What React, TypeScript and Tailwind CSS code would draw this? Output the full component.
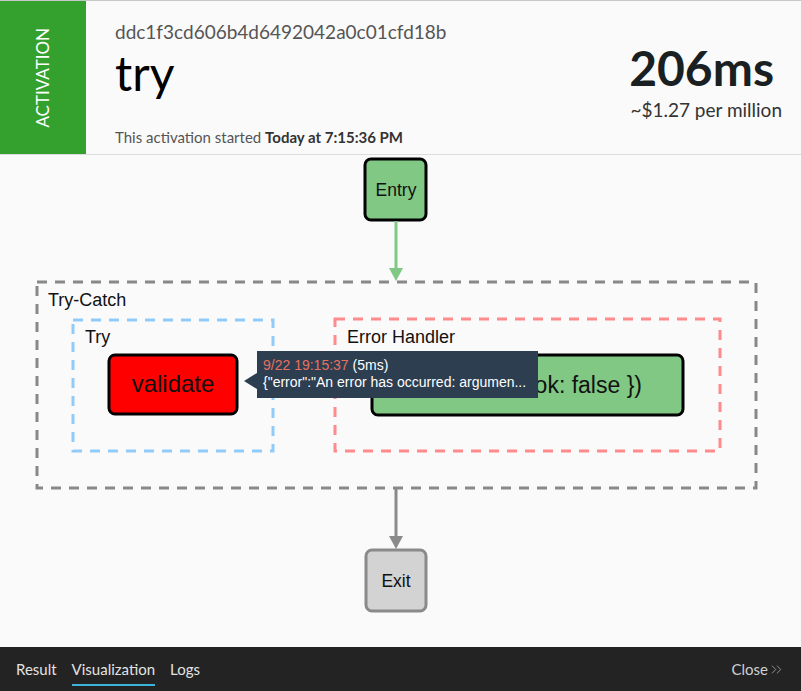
import { ChevronsRight } from "lucide-react";

const TABS = [
  { label: "Result", active: false },
  { label: "Visualization", active: true },
  { label: "Logs", active: false },
];

function Diagram() {
  return (
    <svg
      className="absolute inset-0"
      width={801}
      height={492}
      viewBox="0 155 801 492"
      style={{ fontFamily: '"Liberation Sans", Arial, sans-serif' }}
    >
      {/* entry */}
      <rect x={365} y={159} width={61} height={61} rx={6} fill="#80c883" stroke="#000" strokeWidth={3} />
      <text x={396} y={196} textAnchor="middle" fontSize={17.5} fill="#111">Entry</text>
      <line x1={396} y1={221} x2={396} y2={270} stroke="#80c883" strokeWidth={3} />
      <polygon points="389,268 403,268 396,281" fill="#80c883" />

      {/* try-catch */}
      <rect x={37} y={282} width={719} height={206} fill="none" stroke="#888" strokeWidth={3} strokeDasharray="10 8" />
      <text x={48} y={306} fontSize={18} fill="#111">Try-Catch</text>

      {/* try */}
      <rect x={73} y={320} width={200} height={131} fill="none" stroke="#90cbf9" strokeWidth={3} strokeDasharray="10 8" />
      <text x={85} y={343} fontSize={18} fill="#111">Try</text>
      <rect x={109} y={355} width={128} height={59} rx={6} fill="#ff0000" stroke="#000" strokeWidth={3} />
      <text x={173} y={392} textAnchor="middle" fontSize={24} fill="#111">validate</text>

      {/* error handler */}
      <rect x={335} y={319} width={385} height={132} fill="none" stroke="#ff8a8c" strokeWidth={3} strokeDasharray="10 8" />
      <text x={347} y={343} fontSize={18} fill="#111">Error Handler</text>
      <rect x={372} y={355} width={311} height={60} rx={6} fill="#80c883" stroke="#000" strokeWidth={3} />
      <text x={642} y={393} textAnchor="end" fontSize={23} fill="#111">{"({ ok: false })"}</text>

      {/* exit */}
      <line x1={396} y1={489} x2={396} y2={538} stroke="#8a8a8a" strokeWidth={3} />
      <polygon points="389,536 403,536 396,549" fill="#8a8a8a" />
      <rect x={366} y={550} width={60} height={61} rx={6} fill="#d3d3d3" stroke="#8a8a8a" strokeWidth={3} />
      <text x={396} y={587} textAnchor="middle" fontSize={17.5} fill="#111">Exit</text>
    </svg>
  );
}

export default function App() {
  return (
    <div className="w-[801px] h-[691px] flex flex-col bg-[#fafafa] border-t border-[#c8c8c8] font-['Lato',sans-serif] overflow-hidden">
      {/* Header */}
      <header className="h-[154px] shrink-0 flex border-b border-[#dcdcdc]">
        <div className="w-[86px] bg-[#34a12f] flex items-center justify-center">
          <span className="-rotate-90 text-white text-[17px] whitespace-nowrap">ACTIVATION</span>
        </div>
        <div className="flex-1 pl-[29px] pr-[19px] pt-[19px] flex">
          <div className="flex-1 flex flex-col">
            <div className="text-[19px] leading-[24px] text-[#555]">ddc1f3cd606b4d6492042a0c01cfd18b</div>
            <div className="text-[48px] leading-[48px] text-black mt-[5px]">try</div>
            <div className="mt-auto mb-[6px] text-[15px] text-[#555]">
              This activation started <span className="font-bold text-[#333]">Today at 7:15:36 PM</span>
            </div>
          </div>
          <div className="flex flex-col items-end pt-[24px]">
            <div className="text-[48px] leading-[48px] font-bold text-[#1a1f22] mr-[8px]">206ms</div>
            <div className="text-[19px] leading-[24px] text-[#333] mt-[6px]">~$1.27 per million</div>
          </div>
        </div>
      </header>

      {/* Canvas */}
      <div className="relative flex-1">
        <Diagram />
        <div className="absolute left-[257px] top-[196px] w-[281px] h-[47px] bg-[#2c3e50] px-[6px] pt-[6px] font-['Liberation_Sans',Arial,sans-serif] text-[14px] leading-[17px] text-white">
          <div className="absolute left-[-13px] top-[22px] w-0 h-0 border-y-[8px] border-y-transparent border-r-[13px] border-r-[#2c3e50]" />
          <div>
            <span className="text-[#e8705f]">9/22 19:15:37</span> (5ms)
          </div>
          <div className="whitespace-nowrap">{'{"error":"An error has occurred: argumen...'}</div>
        </div>
      </div>

      {/* Footer */}
      <footer className="h-[44px] shrink-0 bg-[#232323] flex items-center justify-between px-[16px] text-[15px]">
        <nav className="flex gap-[15px]">
          {TABS.map((t) => (
            <span
              key={t.label}
              className={`relative text-[#e2e2e2] ${t.active ? "after:absolute after:left-0 after:right-0 after:bottom-[-6px] after:h-[2px] after:bg-[#3db3d9]" : ""}`}
            >
              {t.label}
            </span>
          ))}
        </nav>
        <button className="flex items-center text-[#d0d0d0]">
          Close
          <ChevronsRight className="w-[17px] h-[17px] text-[#9a9a9a]" strokeWidth={1.3} />
        </button>
      </footer>
    </div>
  );
}
